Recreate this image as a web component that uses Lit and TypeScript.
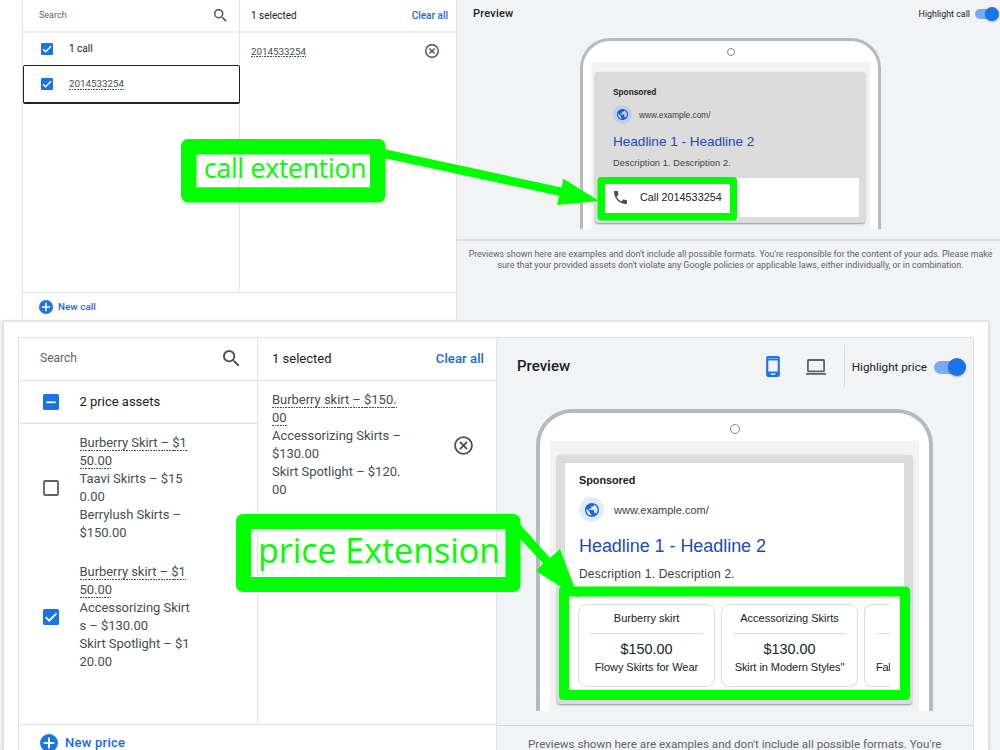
import { LitElement, html, svg, css } from "lit";
import { customElement } from "lit/decorators.js";

const searchIcon = html`<svg class="ic-search" viewBox="3 3 18 18"><path fill="#4a4d51" d="M15.5 14h-.79l-.28-.27A6.47 6.47 0 0 0 16 9.5 6.5 6.5 0 1 0 9.5 16c1.61 0 3.09-.59 4.23-1.57l.27.28v.79l5 4.99L20.49 19l-4.99-5zm-6 0a4.5 4.5 0 1 1 0-9 4.5 4.5 0 0 1 0 9z"/></svg>`;
const removeIcon = html`<svg class="ic-remove" viewBox="0 0 20 20"><circle cx="10" cy="10" r="8.9" fill="none" stroke="#4a4d51" stroke-width="1.9"/><path d="M6.3 6.3l7.4 7.4M13.7 6.3l-7.4 7.4" stroke="#4a4d51" stroke-width="1.9"/></svg>`;
const addIcon = html`<svg class="ic-add" viewBox="0 0 20 20"><circle cx="10" cy="10" r="10" fill="#1a73e8"/><path d="M10 4v12M4 10h12" stroke="#fff" stroke-width="2.2"/></svg>`;
const globeIcon = html`<svg class="ic-globe" viewBox="2 2 20 20"><path fill="currentColor" d="M12 2C6.48 2 2 6.48 2 12s4.48 10 10 10 10-4.48 10-10S17.52 2 12 2zm-1 17.930c-3.950-.490-7-3.850-7-7.930 0-.620.080-1.210.210-1.790L9 15v1c0 1.100.900 2 2 2v1.930zm6.900-2.540c-.260-.810-1-1.390-1.900-1.390h-1v-3c0-.550-.450-1-1-1H8v-2h2c.550 0 1-.450 1-1V7h2c1.100 0 2-.900 2-2v-.410c2.930 1.190 5 4.060 5 7.410 0 2.080-.800 3.970-2.100 5.390z"/></svg>`;
const callIcon = html`<svg class="ic-call" viewBox="3 3 18 18"><path fill="#4a4d51" d="M6.620 10.790c1.440 2.830 3.760 5.140 6.590 6.590l2.200-2.200c.270-.270.670-.360 1.020-.240 1.120.370 2.330.570 3.570.570.550 0 1 .450 1 1V20c0 .550-.450 1-1 1-9.390 0-17-7.610-17-17 0-.550.450-1 1-1h3.500c.550 0 1 .450 1 1 0 1.250.200 2.450.570 3.570.110.350.030.740-.250 1.020l-2.200 2.200z"/></svg>`;
const phoneIcon = html`<svg class="ic-phone" viewBox="0 0 13 20"><rect width="13" height="20" rx="1.8" fill="#1a73e8"/><rect x="2" y="4.2" width="9" height="10.6" fill="#f1f3f4"/><path d="M2 2.400h9" stroke="#8ab4f0" stroke-width=".9"/><path d="M4.300 17.200h4.400" stroke="#fff" stroke-width="1.3"/></svg>`;
const laptopIcon = html`<svg class="ic-laptop" viewBox="0 0 20 16"><rect x="1.9" y="1" width="16.2" height="11.4" rx="1" fill="none" stroke="#5f6368" stroke-width="1.8"/><path d="M0 14.900h20" stroke="#5f6368" stroke-width="1.8"/></svg>`;

type BoxState = "on" | "off" | "mixed";
const checkbox = (state: BoxState) => html`<svg class="box" viewBox="0 0 16 16">
  ${state === "off"
    ? svg`<rect x="1" y="1" width="14" height="14" rx="1" fill="#fff" stroke="#5f6368" stroke-width="1.8"/>`
    : svg`<rect width="16" height="16" rx="1.5" fill="#1a73e8"/>`}
  ${state === "on" ? svg`<path d="M2.700 8.200l3.500 3.500 7.200-7.300" fill="none" stroke="#fff" stroke-width="1.9"/>` : ""}
  ${state === "mixed" ? svg`<path d="M3.300 8.300h9.400" stroke="#fff" stroke-width="1.7"/>` : ""}
</svg>`;

const lines = (underlined: string[], plain: string[]) => html`<div class="lines">
  ${underlined.map((t) => html`<div><span class="u">${t}</span></div>`)}
  ${plain.map((t) => html`<div>${t}</div>`)}
</div>`;

const priceCards = [
  { name: "Burberry skirt", price: "$150.00", note: "Flowy Skirts for Wear" },
  { name: "Accessorizing Skirts", price: "$130.00", note: "Skirt in Modern Styles\"" },
  { name: "", price: "", note: "Fal" },
];

@customElement("app-root")
export class AppRoot extends LitElement {
  static styles = css`
    :host { display: block; position: relative; width: 1000px; height: 750px; overflow: hidden; background: #f1f3f4; font-family: Roboto, sans-serif; color: #202124; }
    * { box-sizing: border-box; }
    svg { display: block; flex: none; }
    .row { display: flex; align-items: center; }
    .grow { flex: 1; }
    .lines { white-space: nowrap; }
    .u { padding-bottom: 1px; background: repeating-linear-gradient(90deg, #4a4d51 0 1.7px, transparent 1.7px 2.7px) 0 100% / 100% 1.3px no-repeat; }
    .muted { color: #5f6368; }
    .link { color: #1a66e8; font-weight: 500; }
    .ad { font-family: "Liberation Sans", Arial, sans-serif; }
    .ad div { white-space: nowrap; }

    .top { display: grid; grid-template-columns: 217px 217px 1fr; grid-template-rows: 292px 28px; height: 320px; padding-left: 22px; background: #fff; }
    .top .list, .top .newrow { border-left: 1px solid #e3e5e8; }
    .top .chosen { border-left: 1px solid #e3e5e8; }
    .top .head { height: 33px; border-bottom: 2px solid #eceef0; font-size: 10px; }
    .top .list .head { padding: 0 12px 1px 16px; font-size: 9px; }
    .top .ic-search { width: 13px; height: 13px; }
    .top .chosen .head { padding: 0 8px 0 11px; }
    .top .group { height: 32px; padding: 0 0 1px 18px; gap: 16px; font-size: 10px; }
    .top .box { width: 12px; height: 12px; }
    .top .focus { position: relative; z-index: 1; height: 39px; width: 217px; padding-left: 17px; gap: 16px; border: 1px solid #202124; border-bottom-width: 2px; border-radius: 2px; font-size: 9.8px; color: #4a4d51; }
    .top .picked { height: 36px; padding: 0 17px 0 11px; font-size: 9.8px; color: #4a4d51; }
    .top .ic-remove { width: 14px; height: 14px; }
    .top .newrow { grid-column: 1 / 3; grid-row: 2; border-top: 1px solid #e0e2e5; padding-left: 16px; gap: 5px; font-size: 9.8px; }
    .top .newrow .link { letter-spacing: .08px; }
    .top .ic-add { width: 14px; height: 14px; }
    .top .preview { grid-column: 3; grid-row: 1 / 3; background: #f1f3f4; border-left: 1px solid #dfe1e5; }
    .top .bar { height: 27px; padding: 0 1px 0 16px; }
    .title { font-weight: 500; }
    .top .title { font-size: 11px; letter-spacing: .2px; }
    .top .bar .lbl { font-size: 8.9px; margin-right: 5px; }
    .toggle { position: relative; }
    .track { background: #7baaf0; }
    .knob { position: absolute; border-radius: 50%; background: #1a73e8; box-shadow: 0 1px 2px rgba(0,0,0,.3); }
    .top .toggle { width: 24px; height: 14px; padding-top: 2px; }
    .top .track { width: 21px; height: 10px; border-radius: 5px; }
    .top .knob { width: 14px; height: 14px; right: 0; top: 0; }
    .device { background: #fff; border-style: solid; border-color: #b6bac0; border-bottom: 0; }
    .cam { border: 1px solid #85898e; border-radius: 50%; margin: 0 auto; }
    .screen { background: #f1f3f4; }
    .adcard { background: #dcdcdc; box-shadow: 0 1px 2px rgba(0,0,0,.4); border-radius: 3px; }
    .top .device { width: 301px; height: 191px; margin: 11px 0 0 123px; border-width: 3px 3px 0; border-radius: 30px 30px 0 0; padding: 7px 8px 0; }
    .top .cam { width: 8px; height: 8px; }
    .top .screen { margin-top: 6px; height: 167px; padding: 10px 5px 0 4px; }
    .top .adcard { height: 151px; padding: 13px 6px 0 3px; }
    .globe { border-radius: 50%; display: grid; place-items: center; }
    .top .body { padding-left: 15px; }
    .sp { font-weight: 700; }
    .head2 { color: #1a4bbf; }
    .top .sp { font-size: 8.3px; line-height: 12px; padding-top: 1px; height: 12px; }
    .top .urlrow { margin-top: 8px; gap: 7px; font-size: 8.3px; color: #3c4043; }
    .top .globe { width: 19px; height: 19px; background: #bfcfe8; color: #1a5fd8; }
    .top .ic-globe { width: 11px; height: 11px; }
    .top .head2 { font-size: 13.6px; line-height: 16px; margin-top: 10px; letter-spacing: -.03px; }
    .top .desc { font-size: 9.2px; line-height: 12px; margin-top: 7px; color: #3c4043; letter-spacing: .1px; }
    .top .callrow { margin-top: 9px; height: 39px; background: #fff; padding: 0 0 1px 16px; gap: 13px; font-size: 10.8px; }
    .top .ic-call { width: 13px; height: 13px; }
    .top .note { margin-top: 10px; border-top: 2px solid #dadce0; padding: 8px 0 0 4px; text-align: center; color: #5f6368; font-size: 8.85px; line-height: 10.5px; white-space: nowrap; }

    .modal { width: 984px; height: 428px; margin: 2px 0 0 4px; background: #fff; padding: 15px 14px 0; box-shadow: 0 0 3px 1px #cfd3d9; }
    .bottom { display: grid; grid-template-columns: 239px 238px 1fr; grid-template-rows: 386px 60px; border: 1px solid #dfe1e5; height: 446px; }
    .bottom .head { height: 43px; border-bottom: 1px solid #dfe1e5; font-size: 13px; padding-bottom: 2px !important; }
    .bottom .list .head { padding: 0 17px 0 21px; font-size: 12px; }
    .bottom .list { border-right: 1px solid #dfe1e5; }
    .bottom .ic-search { width: 17px; height: 17px; }
    .bottom .chosen .head { padding: 0 12px 0 14px; }
    .bottom .chosen .head .link { padding-top: 1px; letter-spacing: .1px; }
    .bottom .group { height: 43px; border-bottom: 1px solid #dfe1e5; padding: 0 0 1px 24px; gap: 20.500px; font-size: 13px; }
    .bottom .box { width: 16px; height: 16px; }
    .bottom .item { height: 129px; padding: 0 0 1px 24px; gap: 20.500px; font-size: 13px; line-height: 17.9px; color: #4a4d51; letter-spacing: -.05px; }
    .bottom .picked { height: 128px; padding: 0 23px 0 14px; font-size: 13px; line-height: 17.9px; color: #4a4d51; letter-spacing: -.03px; }
    .bottom .ic-remove { width: 19px; height: 19px; }
    .bottom .newrow { grid-column: 1 / 3; grid-row: 2; border-top: 1px solid #dfe1e5; padding: 9px 0 0 21px; gap: 7px; font-size: 13px; align-items: flex-start; line-height: 18px; letter-spacing: .25px; }
    .bottom .ic-add { width: 18px; height: 18px; }
    .bottom .preview { grid-column: 3; grid-row: 1 / 3; background: #f1f3f4; border-left: 1px solid #dfe1e5; }
    .bottom .bar { height: 57px; padding: 0 7px 0 20px; }
    .bottom .title { font-size: 15px; padding-bottom: 2px; }
    .ic-phone { width: 14px; height: 21px; margin-right: 26px; }
    .ic-laptop { width: 20px; height: 16px; }
    .sep { width: 1px; height: 43px; background: #dadce0; margin: 0 7px 0 18px; }
    .bottom .bar .lbl { font-size: 11.7px; margin-right: 7px; }
    .bottom .toggle { width: 32px; height: 18px; padding-top: 3px; }
    .bottom .track { width: 28px; height: 13px; border-radius: 7px; }
    .bottom .knob { width: 18px; height: 18px; right: 0; top: 0; }
    .bottom .device { width: 397px; height: 302px; margin: 14px 0 0 39px; border-width: 4px 4px 0; border-radius: 36px 36px 0 0; padding: 11px 10px 0; }
    .bottom .cam { width: 10px; height: 10px; }
    .bottom .screen { margin-top: 7px; height: 270px; padding: 14px 7px 0; }
    .bottom .adcard { height: 249px; padding: 8px 8px 0; }
    .bottom .white { background: #fff; height: 233px; padding: 10px 13px 0 14px; }
    .bottom .sp { font-size: 10.8px; line-height: 15px; height: 14px; }
    .bottom .urlrow { margin-top: 10px; gap: 10px; font-size: 11px; color: #3c4043; }
    .bottom .globe { width: 25px; height: 25px; background: #e1ebfc; color: #1a66e8; }
    .bottom .ic-globe { width: 14px; height: 14px; }
    .bottom .head2 { font-size: 18px; line-height: 22px; margin-top: 13px; letter-spacing: -.05px; }
    .bottom .desc { font-size: 12px; line-height: 16px; margin-top: 9px; color: #3c4043; letter-spacing: .2px; }
    .cards { display: flex; gap: 6px; margin: 22px 0 0 -1px; width: 312px; overflow: hidden; }
    .card { flex: none; width: 137px; height: 83px; border: 1px solid #dadce0; border-radius: 8px; padding: 6px 11px 0; text-align: center; }
    .cname { font-size: 11px; line-height: 15px; height: 23px; border-bottom: 1px solid #dadce0; }
    .cprice { font-size: 14.4px; line-height: 18px; height: 18px; margin-top: 6px; }
    .cnote { font-size: 11px; line-height: 18px; letter-spacing: -.05px; margin: 0 -6px; }
    .card:last-child { width: 26px; border-right: 0; border-radius: 8px 0 0 8px; padding-right: 0; }
    .card:last-child .cnote { text-align: left; margin: 0; letter-spacing: -.3px; }
    .bottom .note { margin-top: 14px; border-top: 1px solid #d0d3d8; padding: 11px 0 0 31px; color: #5f6368; font-size: 11.62px; line-height: 15px; white-space: nowrap; }
    .marks { position: absolute; left: 0; top: 0; width: 1000px; height: 750px; }
    .marks text { font-family: "Open Sans", "Noto Sans", sans-serif; font-weight: 400; fill: #0f0; }
  `;

  render() {
    return html`
      <section class="top">
        <div class="list">
          <div class="head row"><span class="grow muted">Search</span>${searchIcon}</div>
          <div class="group row">${checkbox("on")}<span>1 call</span></div>
          <div class="focus row">${checkbox("on")}<span class="u">2014533254</span></div>
        </div>
        <div class="chosen">
          <div class="head row"><span class="grow">1 selected</span><span class="link">Clear all</span></div>
          <div class="picked row"><div class="grow"><span class="u">2014533254</span></div>${removeIcon}</div>
        </div>
        <div class="newrow row">${addIcon}<span class="link">New call</span></div>
        <div class="preview">
          <div class="bar row"><span class="title grow">Preview</span><span class="lbl">Highlight call</span>
            <div class="toggle"><div class="track"></div><div class="knob"></div></div></div>
          <div class="device"><div class="cam"></div>
            <div class="screen"><div class="adcard ad">
              <div class="body">
                <div class="sp">Sponsored</div>
                <div class="urlrow row"><div class="globe">${globeIcon}</div>www.example.com/</div>
                <div class="head2">Headline 1 - Headline 2</div>
                <div class="desc">Description 1. Description 2.</div>
              </div>
              <div class="callrow row">${callIcon}<span>Call 2014533254</span></div>
            </div></div>
          </div>
          <div class="note">Previews shown here are examples and don't include all possible formats. You're responsible for the content of your ads. Please make<br>sure that your provided assets don't violate any Google policies or applicable laws, either individually, or in combination.</div>
        </div>
      </section>

      <section class="modal"><div class="bottom">
        <div class="list">
          <div class="head row"><span class="grow muted">Search</span>${searchIcon}</div>
          <div class="group row">${checkbox("mixed")}<span>2 price assets</span></div>
          <div class="item row">${checkbox("off")}${lines(["Burberry Skirt – $1", "50.00"], ["Taavi Skirts – $15", "0.00", "Berrylush Skirts –", "$150.00"])}</div>
          <div class="item row">${checkbox("on")}${lines(["Burberry skirt – $1", "50.00"], ["Accessorizing Skirt", "s – $130.00", "Skirt Spotlight – $1", "20.00"])}</div>
        </div>
        <div class="chosen">
          <div class="head row"><span class="grow">1 selected</span><span class="link">Clear all</span></div>
          <div class="picked row"><div class="grow">${lines(["Burberry skirt – $150.", "00"], ["Accessorizing Skirts –", "$130.00", "Skirt Spotlight – $120.", "00"])}</div>${removeIcon}</div>
        </div>
        <div class="newrow row">${addIcon}<span class="link">New price</span></div>
        <div class="preview">
          <div class="bar row"><span class="title grow">Preview</span>${phoneIcon}${laptopIcon}<div class="sep"></div><span class="lbl">Highlight price</span>
            <div class="toggle"><div class="track"></div><div class="knob"></div></div></div>
          <div class="device"><div class="cam"></div>
            <div class="screen"><div class="adcard ad"><div class="white">
              <div class="sp">Sponsored</div>
              <div class="urlrow row"><div class="globe">${globeIcon}</div>www.example.com/</div>
              <div class="head2">Headline 1 - Headline 2</div>
              <div class="desc">Description 1. Description 2.</div>
              <div class="cards">${priceCards.map((c) => html`<div class="card">
                <div class="cname">${c.name}</div><div class="cprice">${c.price}</div><div class="cnote">${c.note}</div></div>`)}</div>
            </div></div></div>
          </div>
          <div class="note">Previews shown here are examples and don't include all possible formats. You're</div>
        </div>
      </div></section>

      <svg class="marks" viewBox="0 0 1000 750">
        <g fill="#0f0" fill-rule="evenodd">
          <path d="M188 139H378.500a7 7 0 0 1 7 7V195.500a7 7 0 0 1-7 7H188a7 7 0 0 1-7-7V146a7 7 0 0 1 7-7zM196.500 154.500V187.300H370V154.500z"/>
          <path d="M243 514H513.500a7 7 0 0 1 7 7V585a7 7 0 0 1-7 7H243a7 7 0 0 1-7-7V521a7 7 0 0 1 7-7zM251 529V577H505.500V529z"/>
          <path d="M601 177H733.500a3.500 3.500 0 0 1 3.500 3.500V217a3.500 3.500 0 0 1-3.500 3.500H601a3.500 3.500 0 0 1-3.500-3.500V180.500a3.500 3.500 0 0 1 3.500-3.500zM605 184V213H730V184z"/>
          <path d="M563 586.500H906a4 4 0 0 1 4 4V696a4 4 0 0 1-4 4H563a4 4 0 0 1-4-4V590.500a4 4 0 0 1 4-4zM569 596.500V690H900V596.500z"/>
          <path d="M385 149.300L561.500 187.500 563.500 178.800 599 201 557 205 559.300 195.800 385 158.300z"/>
          <path d="M518 522L550 558 560 549 578.500 598 536 571 543 563.500 514 532z"/>
        </g>
        <text x="204" y="178" font-size="26.5" textLength="162.5">call extention</text>
        <text x="258" y="563" font-size="34" textLength="242">price Extension</text>
      </svg>
    `;
  }
}
